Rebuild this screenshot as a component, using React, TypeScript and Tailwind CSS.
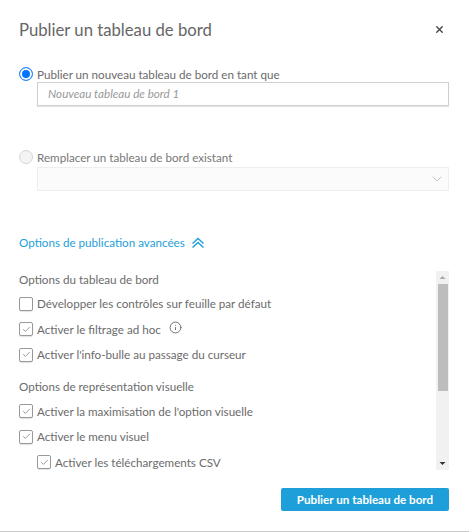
import { ChevronDown, Info, X, Check } from 'lucide-react';

function CheckRow({ label, checked, indent, info }: { label: string; checked?: boolean; indent?: boolean; info?: boolean }) {
  return (
    <div className={`flex items-center h-[25.5px] ${indent ? 'pl-[18px]' : ''}`}>
      <span className="w-[14px] h-[14px] mr-[4px] shrink-0 border border-[#999] rounded-[2px] bg-white shadow-[0_1px_1px_rgba(0,0,0,0.12)] flex items-center justify-center">
        {checked && <Check className="w-[9px] h-[9px] text-[#666]" strokeWidth={1.75} />}
      </span>
      <span>{label}</span>
      {info && <Info className="w-[13px] h-[13px] ml-[8px] -mt-[3px] text-[#555]" strokeWidth={1.5} />}
    </div>
  );
}

export default function App() {
  return (
    <div className="w-[469px] h-[532px] bg-white border-b border-[#c8c8c8] text-[#6b6b6b] text-[11.65px] flex flex-col pl-[19px] pr-[20px] overflow-hidden" style={{ fontFamily: 'Lato, sans-serif' }}>
      <div className="flex items-center justify-between h-[20px] mt-[21px] text-[#666]">
        <h1 className="text-[16.7px] font-normal">Publier un tableau de bord</h1>
        <X className="w-[11px] h-[11px] mr-[4px] -mt-[3px] text-[#444]" strokeWidth={3} />
      </div>

      <div className="flex items-center h-[16px] mt-[25px]">
        <span className="w-[14px] h-[14px] mr-[4px] -mt-[1px] rounded-full border border-[#2f86ff] bg-[#0073ff] shadow-[inset_0_0_0_2px_white]" />
        <span className="mt-[1px]">Publier un nouveau tableau de bord en tant que</span>
      </div>
      <div className="ml-[18px] h-[24px] border border-[#d0d0d0] shadow-[0_1px_1px_rgba(0,0,0,0.1)] flex items-center pl-[10px] italic text-[#999]">
        Nouveau tableau de bord 1
      </div>

      <div className="flex items-center h-[16px] mt-[43px] text-[#777]">
        <span className="w-[14px] h-[14px] mr-[4px] -mt-[1px] rounded-full border border-[#d5d5d5] bg-[#f4f4f4]" />
        <span className="mt-[1px]">Remplacer un tableau de bord existant</span>
      </div>
      <div className="ml-[18px] mt-[2px] h-[24px] border border-[#eeeeee] bg-[#fbfbfb] flex items-center justify-end pr-[3px]">
        <ChevronDown className="w-[16px] h-[16px] text-[#c4c4c4]" strokeWidth={1.5} />
      </div>

      <div className="flex items-center h-[16px] mt-[44px] text-[#1d9fd9]">
        <span>Options de publication avancées</span>
        <svg className="w-[14px] h-[12px] ml-[6px]" viewBox="0 0 14 12" fill="none" stroke="currentColor" strokeWidth="1.4">
          <path d="M1.5 6.5 7 1.5l5.5 5" />
          <path d="M1.5 10.5 7 5.5l5.5 5" />
        </svg>
      </div>

      <div className="flex mt-[20px] h-[199px]">
        <div className="flex-1 overflow-hidden">
          <p className="h-[16px] leading-[16px] mt-[1px]">Options du tableau de bord</p>
          <div className="mt-[3px]">
            <CheckRow label="Développer les contrôles sur feuille par défaut" />
            <CheckRow label="Activer le filtrage ad hoc" checked info />
            <CheckRow label="Activer l'info-bulle au passage du curseur" checked />
          </div>
          <p className="h-[16px] leading-[16px] mt-[11px]">Options de représentation visuelle</p>
          <div className="mt-[4px]">
            <CheckRow label="Activer la maximisation de l'option visuelle" checked />
            <CheckRow label="Activer le menu visuel" checked />
            <CheckRow label="Activer les téléchargements CSV" checked indent />
          </div>
        </div>
        <div className="w-[13px] bg-[#f1f1f1] flex flex-col items-center">
          <svg className="w-[13px] h-[13px] shrink-0" viewBox="0 0 13 13"><path d="M3.5 8 6.5 5 9.5 8z" fill="#a8a8a8" /></svg>
          <div className="w-[10px] h-[107px] bg-[#bdbdbd]" />
          <div className="flex-1" />
          <svg className="w-[13px] h-[13px] shrink-0" viewBox="0 0 13 13"><path d="M3.5 5 6.5 8 9.5 5z" fill="#333" /></svg>
        </div>
      </div>

      <div className="flex justify-end mt-[18px]">
        <button className="w-[168px] h-[23px] bg-[#1f9fd9] rounded-[2px] text-white text-[11.65px] font-bold">Publier un tableau de bord</button>
      </div>
    </div>
  );
}
